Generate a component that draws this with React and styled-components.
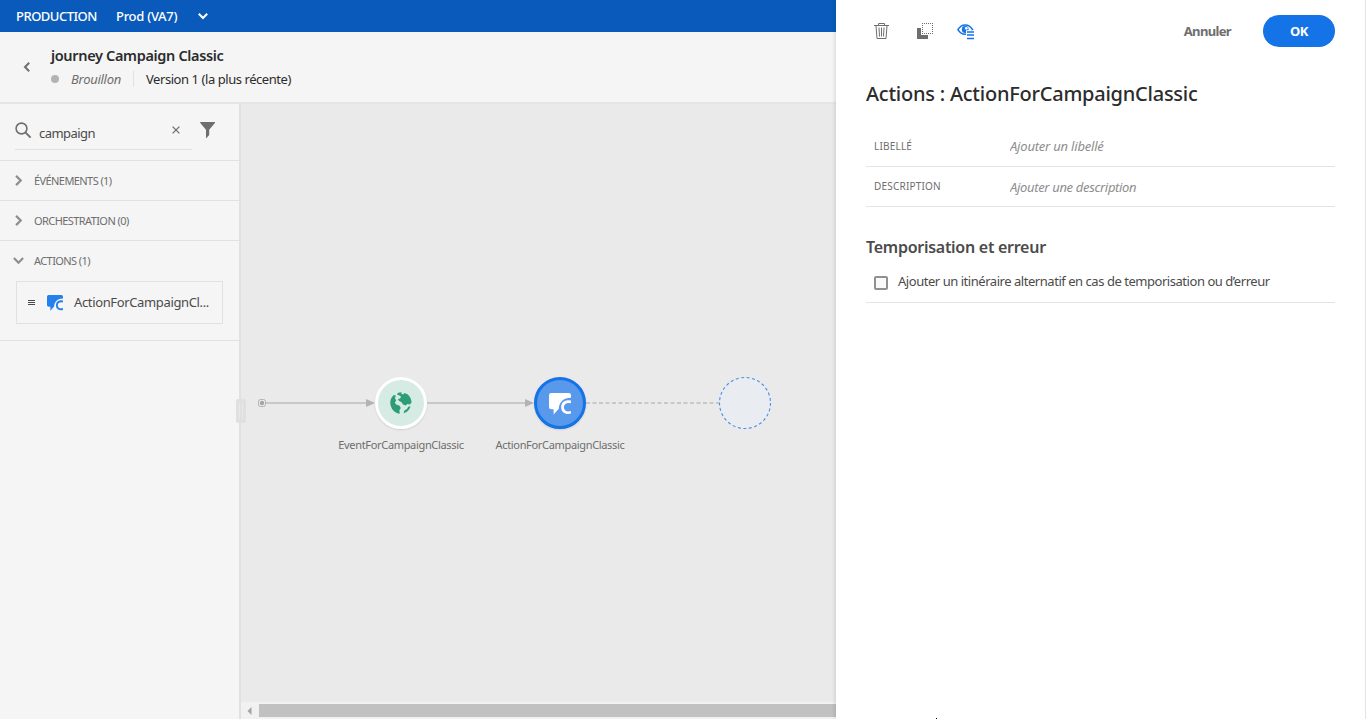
import React, { useState } from 'react';
import styled, { createGlobalStyle } from 'styled-components';

const GlobalStyle = createGlobalStyle`
    * {
        box-sizing: border-box;
    }

    body {
        margin: 0;
        overflow: hidden;
        font-family: 'Noto Sans', 'Open Sans', sans-serif;
        font-size: 13px;
        color: #4b4b4b;
    }

    button {
        padding: 0;
        border: 0;
        background: none;
        font-family: inherit;
        cursor: pointer;
    }

    svg {
        display: block;
        flex: none;
    }
`;

const Page = styled.div`
    display: flex;
    height: 719px;
    background: #fff;
`;

const Main = styled.div`
    width: 836px;
    display: flex;
    flex-direction: column;
    background: #f5f5f5;
`;

const TopBar = styled.div`
    height: 32px;
    padding-left: 16px;
    display: flex;
    align-items: center;
    background: #095aba;
    color: #fff;
    font-weight: 500;
    white-space: nowrap;
`;

const Environment = styled.span`
    width: 100px;
    letter-spacing: -0.5px;
`;

const Sandbox = styled.span`
    width: 82px;
    letter-spacing: -0.28px;
`;

const Header = styled.div`
    height: 72px;
    display: flex;
    border-bottom: 2px solid #e6e6e6;
`;

const BackButton = styled.button`
    width: 51px;
    padding-left: 22px;
`;

const JourneyInfo = styled.div`
    padding-top: 12px;
    white-space: nowrap;
`;

const JourneyTitle = styled.div`
    height: 23px;
    line-height: 22px;
    font-size: 14.5px;
    font-weight: 600;
    letter-spacing: -0.34px;
    color: #2c2c2c;
`;

const JourneyStatus = styled.div`
    height: 24px;
    display: flex;
    align-items: center;
`;

const StatusDot = styled.span`
    width: 8px;
    height: 8px;
    margin-right: 12px;
    border-radius: 50%;
    background: #b3b3b3;
`;

const StatusLabel = styled.span`
    width: 62px;
    font-style: italic;
    letter-spacing: -0.28px;
    color: #6e6e6e;
`;

const Version = styled.span`
    padding-left: 12px;
    line-height: 16px;
    border-left: 1px solid #e1e1e1;
    letter-spacing: -0.44px;
    color: #2c2c2c;
`;

const Workspace = styled.div`
    flex: 1;
    display: flex;
    min-height: 0;
`;

const Sidebar = styled.div`
    position: relative;
    width: 241px;
    border-right: 2px solid #e1e1e1;
`;

const ResizeHandle = styled.div`
    position: absolute;
    z-index: 1;
    left: 236px;
    top: 295px;
    width: 10px;
    height: 24px;
    padding: 4px 3px;
    border-radius: 2px;
    background: #e0e0e0;

    &::before {
        content: '';
        display: block;
        height: 16px;
        border: solid #e8e8e8;
        border-width: 0 1px;
    }
`;

const SearchRow = styled.div`
    height: 57px;
    padding-left: 15px;
    display: flex;
    align-items: flex-start;
    border-bottom: 1px solid #e1e1e1;
`;

const SearchField = styled.div`
    width: 177px;
    height: 46px;
    padding-top: 18px;
    display: flex;
    align-items: flex-start;
    border-bottom: 1px solid #e1e1e1;
`;

const SearchInput = styled.input`
    width: 133px;
    height: 20px;
    margin: 1px 0 0 7px;
    padding: 0;
    border: 0;
    outline: 0;
    background: none;
    font: inherit;
    letter-spacing: -0.55px;
    color: #4b4b4b;
`;

const ClearButton = styled.button`
    margin-top: 4px;
`;

const FilterButton = styled.button`
    margin: 17px 0 0 8px;
`;

const SectionBlock = styled.div`
    border-bottom: 1px solid #e1e1e1;
`;

const SectionTitle = styled.button`
    width: 100%;
    height: 39px;
    padding-left: 13px;
    display: flex;
    align-items: center;
    gap: 10px;
    font-size: 11px;
    letter-spacing: -0.58px;
    color: #6e6e6e;
`;

const SectionBody = styled.div`
    padding: 1px 16px 16px;
`;

const PaletteItem = styled.div`
    height: 43px;
    padding-left: 11px;
    display: flex;
    align-items: center;
    border: 1px solid #e1e1e1;
    letter-spacing: -0.36px;
    color: #4b4b4b;

    .grip {
        margin-right: 12px;
    }

    .name {
        width: 137px;
        margin-left: 11px;
        padding-bottom: 2px;
        white-space: nowrap;
    }
`;

const CanvasColumn = styled.div`
    flex: 1;
    display: flex;
    flex-direction: column;
    background: #eaeaea;
`;

const Canvas = styled.div`
    position: relative;
    flex: 1;
`;

const Links = styled.svg`
    position: absolute;
    left: 0;
    top: 0;
`;

const Node = styled.div`
    position: absolute;
    left: ${({ $x }) => $x - 80}px;
    top: ${({ $y }) => $y - 26}px;
    width: 160px;
    display: flex;
    flex-direction: column;
    align-items: center;
`;

const nodeColors = {
    event: { border: '#fff', background: '#d6ebe3' },
    action: { border: '#1473e6', background: '#5899eb' }
};

const NodeCircle = styled.div`
    width: 52px;
    height: 52px;
    padding-top: ${({ $kind }) => $kind === 'action' ? 2 : 0}px;
    display: flex;
    align-items: center;
    justify-content: center;
    border-radius: 50%;
    border: 3px solid ${({ $kind }) => nodeColors[$kind].border};
    background: ${({ $kind }) => nodeColors[$kind].background};
    box-shadow: 0 1px 2px rgba(0, 0, 0, 0.12);
`;

const NodeLabel = styled.div`
    margin-top: 8px;
    line-height: 16px;
    font-size: 11px;
    letter-spacing: -0.33px;
    color: #6e6e6e;
`;

const ScrollBar = styled.div`
    height: 17px;
    padding: 2px 0;
    display: flex;
    background: #f1f1f1;
`;

const ScrollArrow = styled.div`
    width: 18px;
    padding: 3px 0 0 6px;
`;

const ScrollThumb = styled.div`
    flex: 1;
    background: #c1c1c1;
`;

const Panel = styled.div`
    position: relative;
    width: 530px;
    padding: 0 30px;
    background: #fff;
    border-right: 1px solid #e4e4e4;
    box-shadow: -1px 0 4px rgba(0, 0, 0, 0.13);
`;

const PanelToolbar = styled.div`
    height: 62px;
    padding-left: 8px;
    display: flex;
    align-items: center;
`;

const ToolButton = styled.button`
    margin-right: ${({ $gap }) => $gap}px;
`;

const CancelButton = styled.button`
    margin: 0 32px 0 auto;
    font-size: 13px;
    font-weight: 700;
    letter-spacing: -0.65px;
    color: #6e6e6e;
`;

const OkButton = styled.button`
    width: 72px;
    height: 32px;
    border-radius: 16px;
    background: #1473e6;
    font-size: 13px;
    font-weight: 700;
    letter-spacing: -0.5px;
    color: #fff;
`;

const PanelTitle = styled.h1`
    height: 64px;
    margin: 0;
    padding-top: 17px;
    font-size: 20px;
    line-height: 30px;
    font-weight: 500;
    letter-spacing: -0.24px;
    white-space: nowrap;
    color: #2c2c2c;
`;

const Field = styled.label`
    height: ${({ $height }) => $height}px;
    padding-left: 8px;
    display: flex;
    align-items: center;
    border-bottom: 1px solid #e4e4e4;

    .caption {
        width: 136px;
        padding-bottom: 1px;
        font-size: 10px;
        letter-spacing: 0.2px;
        color: #6e6e6e;
    }

    input {
        width: 300px;
        padding: 0;
        border: 0;
        outline: 0;
        font: inherit;
        font-style: italic;
        letter-spacing: ${({ $tracking }) => $tracking}px;
    }

    input::placeholder {
        color: #8e8e8e;
        opacity: 1;
    }
`;

const SubTitle = styled.h2`
    height: 54px;
    margin: 0;
    padding-top: 28px;
    font-size: 16px;
    line-height: 24px;
    font-weight: 600;
    letter-spacing: -0.27px;
    color: #4b4b4b;
`;

const CheckRow = styled.label`
    height: 42px;
    padding: 10px 0 0 8px;
    display: flex;
    align-items: flex-start;
    line-height: 20px;
    letter-spacing: -0.46px;
    white-space: nowrap;
    border-bottom: 1px solid #e4e4e4;

    input {
        appearance: none;
        width: 14px;
        height: 14px;
        margin: 5px 10px 0 0;
        border: 2px solid #909090;
        border-radius: 2px;
        background: #fafafa;
    }
`;

const PointerTip = styled.span`
    position: absolute;
    left: 100px;
    bottom: 0;
    width: 1px;
    height: 1px;
    background: #000;
`;

const Chevron = ({ dir, color = '#8e8e8e', size = 10, weight = 2 }) => {
    const turn = { right: 0, down: 90, left: 180 }[dir];
    return (
        <svg width={size} height={size} viewBox='0 0 10 10'>
            <path
                d='M2.8 0.8 7 5 2.8 9.2'
                fill='none'
                stroke={color}
                strokeWidth={weight}
                transform={`rotate(${turn} 5 5)`}
            />
        </svg>
    );
};

const CampaignIcon = ({ size, color }) => (
    <svg width={size} height={size} viewBox='0 0 22 22'>
        <path
            d='M2.3 0H19.7A2.3 2.3 0 0 1 22 2.3V4.8C15.5 4.6 10.2 8.5 9.8 15.8L4.6 21.6V16.2H2.3A2.3 2.3 0 0 1 0 13.9V2.3A2.3 2.3 0 0 1 2.3 0Z'
            fill={color}
        />
        <path
            d='M22 9C17.2 7.5 13.5 10.1 13.5 14.2C13.5 18.5 17.2 20.8 22 19.2'
            fill='none'
            stroke={color}
            strokeWidth='2.7'
        />
    </svg>
);

const GlobeIcon = () => (
    <svg width='22' height='22' viewBox='0 0 22 22' fill='#2d9d78'>
        <path d='M3.8 2.9 5.8 3.6 5 6.2 6.2 8.6 4.8 10.6 6.2 12.4 9.6 13.8 10.8 16 9.4 18.2 9.8 21.8A11 11 0 0 1 3.8 2.9Z' />
        <path d='M6.8 2.2 8.2 .8 11.6 .3 11.4 1.8 13.4 2.6 14.2 1 17.6 2.3 19.6 4.6A11 11 0 0 1 21.6 10.2L20 12.4 17.4 12 15.6 13.4 13 12.6 11.8 10.4 8.6 8.6 8 7 10.2 6.6 11 4.6 9.2 3.6Z' />
        <path d='M18.2 14.8 20.6 14.2A10.5 10.5 0 0 1 13.6 21.2L14.4 18.6 17 17Z' />
    </svg>
);

const sections = [
    { id: 'events', label: 'ÉVÉNEMENTS (1)', items: ['EventForCampaignCl...'] },
    { id: 'orchestration', label: 'ORCHESTRATION (0)', items: [] },
    { id: 'actions', label: 'ACTIONS (1)', items: ['ActionForCampaignCl...'] }
];

const App = () => {

    const [search, setSearch] = useState('campaign');
    const [open, setOpen] = useState('actions');

    return (
        <>
            <GlobalStyle />
            <Page>
                <Main>
                    <TopBar>
                        <Environment>PRODUCTION</Environment>
                        <Sandbox>Prod (VA7)</Sandbox>
                        <Chevron dir='down' color='#fff' />
                    </TopBar>
                    <Header>
                        <BackButton>
                            <Chevron dir='left' color='#6e6e6e' />
                        </BackButton>
                        <JourneyInfo>
                            <JourneyTitle>journey Campaign Classic</JourneyTitle>
                            <JourneyStatus>
                                <StatusDot />
                                <StatusLabel>Brouillon</StatusLabel>
                                <Version>Version 1 (la plus récente)</Version>
                            </JourneyStatus>
                        </JourneyInfo>
                    </Header>
                    <Workspace>
                        <Sidebar>
                            <SearchRow>
                                <SearchField>
                                    <svg width='17' height='17' viewBox='0 0 17 17' fill='none' stroke='#6e6e6e'>
                                        <circle cx='6.5' cy='6.5' r='5.4' strokeWidth='1.6' />
                                        <path d='M10.4 10.4 15.6 15.6' strokeWidth='1.9' />
                                    </svg>
                                    <SearchInput value={search} onChange={e => setSearch(e.target.value)} />
                                    <ClearButton onClick={() => setSearch('')}>
                                        <svg width='8' height='8' viewBox='0 0 8 8' stroke='#6e6e6e' strokeWidth='1.3'>
                                            <path d='M.6 .6 7.4 7.4M7.4 .6 .6 7.4' />
                                        </svg>
                                    </ClearButton>
                                </SearchField>
                                <FilterButton>
                                    <svg width='16' height='18' viewBox='0 0 16 18' fill='#6e6e6e'>
                                        <path d='M.5 1H14.7Q15.4 1.2 14.9 2L9.2 8.8V14L6 17.4V8.8L.3 2Q-.1 1.2 .5 1Z' />
                                    </svg>
                                </FilterButton>
                            </SearchRow>
                            {
                                sections.map(section => (
                                    <SectionBlock key={section.id}>
                                        <SectionTitle onClick={() => setOpen(section.id)}>
                                            <Chevron dir={open === section.id ? 'down' : 'right'} size={11} />
                                            {section.label}
                                        </SectionTitle>
                                        {open === section.id && (
                                            <SectionBody>
                                                {section.items.map(item => (
                                                    <PaletteItem key={item}>
                                                        <svg className='grip' width='7' height='7' viewBox='0 0 7 7' fill='#4b4b4b'>
                                                            <path d='M0 1H7V2H0ZM0 3H7V4H0ZM0 5H7V6H0Z' />
                                                        </svg>
                                                        <CampaignIcon size={16} color='#2680eb' />
                                                        <span className='name'>{item}</span>
                                                    </PaletteItem>
                                                ))}
                                            </SectionBody>
                                        )}
                                    </SectionBlock>
                                ))
                            }
                            <ResizeHandle />
                        </Sidebar>
                        <CanvasColumn>
                            <Canvas>
                                <Links width='595' height='598'>
                                    <g fill='none' stroke='#c8c8c8' strokeWidth='2'>
                                        <path d='M25 299H127M186 299H286' />
                                        <path d='M345 299H478' strokeDasharray='4 2.5' />
                                    </g>
                                    <rect x='17.5' y='295.5' width='7' height='7' rx='2' fill='none' stroke='#b3b3b3' />
                                    <circle cx='21' cy='299' r='2.2' fill='#a5a5a5' />
                                    <path d='M125 295 134 299 125 303ZM284 295 293 299 284 303Z' fill='#b3b3b3' />
                                    <circle
                                        cx='504'
                                        cy='299'
                                        r='25.5'
                                        fill='#e9ecf1'
                                        stroke='#4a90e8'
                                        strokeWidth='1.1'
                                        strokeDasharray='3 2.5'
                                    />
                                </Links>
                                <Node $x={160} $y={299}>
                                    <NodeCircle $kind='event'><GlobeIcon /></NodeCircle>
                                    <NodeLabel>EventForCampaignClassic</NodeLabel>
                                </Node>
                                <Node $x={319} $y={299}>
                                    <NodeCircle $kind='action'><CampaignIcon size={22} color='#fff' /></NodeCircle>
                                    <NodeLabel>ActionForCampaignClassic</NodeLabel>
                                </Node>
                            </Canvas>
                            <ScrollBar>
                                <ScrollArrow>
                                    <svg width='5' height='8' viewBox='0 0 5 8' fill='#a3a3a3'>
                                        <path d='M4.5 0V8L.5 4Z' />
                                    </svg>
                                </ScrollArrow>
                                <ScrollThumb />
                            </ScrollBar>
                        </CanvasColumn>
                    </Workspace>
                </Main>
                <Panel>
                    <PanelToolbar>
                        <ToolButton $gap={28}>
                            <svg width='15' height='16' viewBox='0 0 15 16' fill='none' stroke='#6e6e6e'>
                                <path d='M0 2.5H15M4.5 2V.5H10.5V2M2 3 3 15.5H12L13 3M5 4.5 5.5 13.5M7.5 4.5V13.5M10 4.5 9.5 13.5' />
                            </svg>
                        </ToolButton>
                        <ToolButton $gap={24}>
                            <svg width='16' height='16' viewBox='0 0 16 16'>
                                <path d='M0 5H4V12H11V16H0Z' fill='#6e6e6e' />
                                <path d='M5 .5H16M5 10.5H16M5.5 2V10M15.5 2V10' fill='none' stroke='#6e6e6e' strokeDasharray='1 1' />
                            </svg>
                        </ToolButton>
                        <ToolButton $gap={0}>
                            <svg width='18' height='17' viewBox='0 0 18 17'>
                                <path d='M.9 6.7C4.5 .3 12 .3 15.6 6.7C12 12.8 4.5 12.8 .9 6.7Z' fill='none' stroke='#1473e6' strokeWidth='1.5' />
                                <circle cx='8.2' cy='6.5' r='3.4' fill='#1473e6' />
                                <circle cx='9.3' cy='5.3' r='1.4' fill='#fff' />
                                <path d='M9 7.2H18V17H9Z' fill='#fff' />
                                <path d='M10 9H17M10 12H17M10 15.5H17' stroke='#1473e6' strokeWidth='1.6' />
                            </svg>
                        </ToolButton>
                        <CancelButton>Annuler</CancelButton>
                        <OkButton>OK</OkButton>
                    </PanelToolbar>
                    <PanelTitle>Actions : ActionForCampaignClassic</PanelTitle>
                    <Field $height={41} $tracking={-0.2}>
                        <span className='caption'>LIBELLÉ</span>
                        <input placeholder='Ajouter un libellé' />
                    </Field>
                    <Field $height={40} $tracking={-0.33}>
                        <span className='caption'>DESCRIPTION</span>
                        <input placeholder='Ajouter une description' />
                    </Field>
                    <SubTitle>Temporisation et erreur</SubTitle>
                    <CheckRow>
                        <input type='checkbox' />
                        Ajouter un itinéraire alternatif en cas de temporisation ou d’erreur
                    </CheckRow>
                    <PointerTip />
                </Panel>
            </Page>
        </>
    );
}

export default App;
